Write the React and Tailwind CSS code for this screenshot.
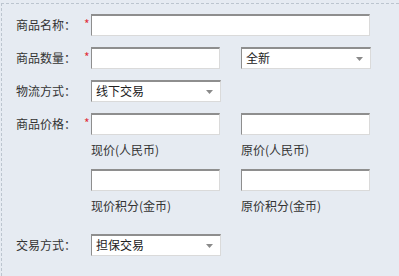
import React from 'react';

const boxCls =
    'h-[22px] bg-white border-t-2 border-l border-r border-b border-t-[#8e8e8e] border-l-[#8e8e8e] border-r-[#dadada] border-b-[#dadada]';

const Field = ({ w }) => <div className={`${boxCls} ${w}`}></div>;

const Select = ({ w, value }) => (
    <div className={`${boxCls} ${w} flex items-center justify-between pl-[4px] pr-[7px] text-[12px] text-[#222]`}>
        <span className="leading-none -mt-[1px]">{value}</span>
        <svg width="7" height="4" viewBox="0 0 7 4">
            <path d="M0 0 L7 0 L3.5 4 Z" fill="#8a8a8a" />
        </svg>
    </div>
);

const Label = ({ text, required }) => (
    <div className="flex items-center pl-[14px]">
        <span className="w-[68px] text-[12px] text-[#333]">{text}</span>
        <span className="w-[7px] text-[12px] text-[#e0303a] leading-none -mt-[3px]">{required ? '*' : ''}</span>
    </div>
);

const App = () => {
    return (
        <div
            className="w-[399px] h-[276px] bg-[#e6ebf2] overflow-hidden"
            style={{ fontFamily: '"Noto Sans CJK SC", "Noto Sans", sans-serif' }}
        >
            <div className="mt-[3px] ml-[1px] h-[273px] border-t border-l border-dashed border-[#bcc5cf]">
                <div className="flex items-center mt-[10px]">
                    <Label text="商品名称：" required />
                    <Field w="w-[279px]" />
                </div>
                <div className="flex items-center mt-[11px]">
                    <Label text="商品数量：" required />
                    <Field w="w-[129px]" />
                    <div className="ml-[21px]">
                        <Select w="w-[130px]" value="全新" />
                    </div>
                </div>
                <div className="flex items-center mt-[11px]">
                    <Label text="物流方式：" />
                    <Select w="w-[130px]" value="线下交易" />
                </div>
                <div className="flex items-center mt-[11px]">
                    <Label text="商品价格：" required />
                    <Field w="w-[129px]" />
                    <div className="ml-[21px]">
                        <Field w="w-[129px]" />
                    </div>
                </div>
                <div className="flex mt-[7px] pl-[89px] text-[12px] text-[#333] leading-[16px]">
                    <span className="w-[150px]">现价(人民币)</span>
                    <span>原价(人民币)</span>
                </div>
                <div className="flex mt-[11px] pl-[89px]">
                    <Field w="w-[129px]" />
                    <div className="ml-[21px]">
                        <Field w="w-[129px]" />
                    </div>
                </div>
                <div className="flex mt-[7px] pl-[89px] text-[12px] text-[#333] leading-[16px]">
                    <span className="w-[150px]">现价积分(金币)</span>
                    <span>原价积分(金币)</span>
                </div>
                <div className="flex items-center mt-[20px]">
                    <Label text="交易方式：" />
                    <Select w="w-[130px]" value="担保交易" />
                </div>
            </div>
        </div>
    );
};

export default App;
